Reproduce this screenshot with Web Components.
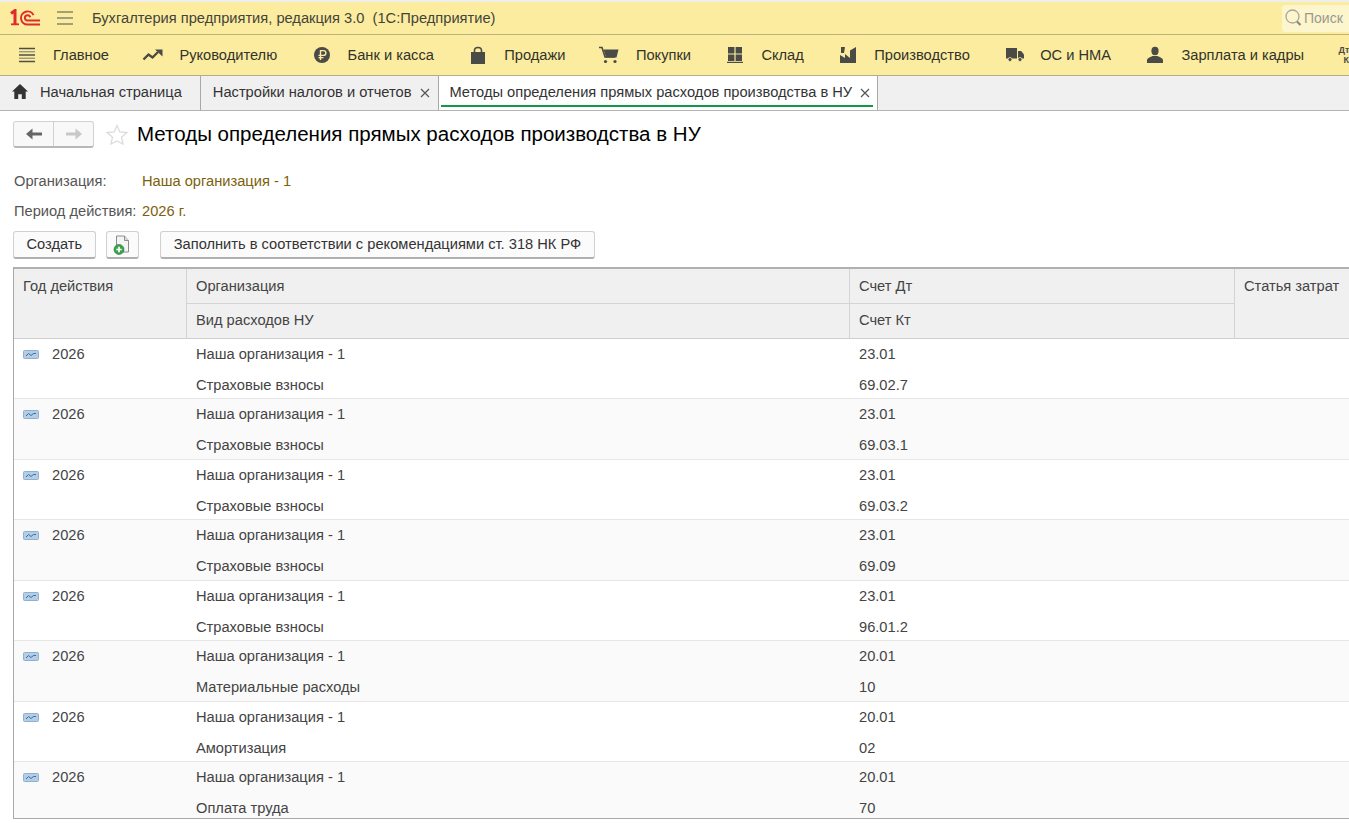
<!DOCTYPE html>
<html lang="ru">
<head>
<meta charset="utf-8">
<title>Методы определения прямых расходов производства в НУ</title>
<style>
  html, body { margin: 0; height: 100%; overflow: hidden; background: #fff; }
  body { display: flex; flex-direction: column; height: 100vh; font: 14.67px "Liberation Sans", Arial, sans-serif; color: #333; }
  svg { display: block; overflow: visible; }
</style>
</head>
<body>
  <app-titlebar>Бухгалтерия предприятия, редакция 3.0  (1С:Предприятие)</app-titlebar>

  <section-bar>
    <section-item label="Главное">
      <svg width="16" height="16" viewBox="0 0 16 16"><path d="M0 1.5h16M0 8h16M0 14.5h16" stroke="#4f4f48" stroke-width="1.4"/><path d="M0 4.8h16M0 11.2h16" stroke="#77776a" stroke-width="1"/></svg>
    </section-item>
    <section-item label="Руководителю">
      <svg width="16" height="16" viewBox="0 0 16 16"><path d="M-1.5 12.5 3.5 7.5 7.5 10.5 13 5" fill="none" stroke="#4a4a46" stroke-width="2.4"/><path d="M10 2.5h7.5V9.5z" fill="#4a4a46"/></svg>
    </section-item>
    <section-item label="Банк и касса">
      <svg width="16" height="16" viewBox="0 0 16 16"><circle cx="8" cy="8" r="8" fill="#4a4a46"/><path d="M6.5 13V3.6h3a2.4 2.4 0 0 1 0 4.8h-5M4.5 10.6h5" fill="none" stroke="#fbec9f" stroke-width="1.4"/></svg>
    </section-item>
    <section-item label="Продажи">
      <svg width="16" height="17" viewBox="0 0 16 17"><path d="M1 5h14v12H1z" fill="#4a4a46"/><path d="M4.5 8V3.5a3.5 3 0 0 1 7 0V8" fill="none" stroke="#4a4a46" stroke-width="1.6"/></svg>
    </section-item>
    <section-item label="Покупки">
      <svg width="16" height="16" viewBox="0 0 16 16"><path d="M-3 .5h3l3 9.5h10" fill="none" stroke="#4a4a46" stroke-width="1.6"/><path d="M1.5 2.5h15l-2 8h-10.5z" fill="#4a4a46"/><circle cx="3.5" cy="14.5" r="1.6" fill="#4a4a46"/><circle cx="13" cy="14.5" r="1.6" fill="#4a4a46"/></svg>
    </section-item>
    <section-item label="Склад">
      <svg width="16" height="16" viewBox="0 0 16 16"><path d="M1 0h6.4v6.4H1zM8.6 0H15v6.4H8.6zM1 7.6h6.4V14H1zM8.6 7.6H15V14H8.6z" fill="#4a4a46"/><path d="M0 15.4h16" stroke="#4a4a46" stroke-width="1.2"/></svg>
    </section-item>
    <section-item label="Производство">
      <svg width="16" height="16" viewBox="0 0 16 16"><path d="M0 16V8l5 3V7l5 4V3.5L16 0v16z" fill="#4a4a46"/><path d="M1 0h4l-1 6H1z" fill="#4a4a46"/></svg>
    </section-item>
    <section-item label="ОС и НМА">
      <svg width="18" height="14" viewBox="0 0 18 14"><path d="M0 0h11v10.5H0z" fill="#4a4a46"/><path d="M12 3h3.2L18 6.5v4h-6z" fill="#4a4a46"/><circle cx="4" cy="11.5" r="2" fill="#4a4a46" stroke="#fbec9f" stroke-width=".8"/><circle cx="14" cy="11.5" r="2" fill="#4a4a46" stroke="#fbec9f" stroke-width=".8"/></svg>
    </section-item>
    <section-item label="Зарплата и кадры">
      <svg width="16" height="16" viewBox="0 0 16 16"><ellipse cx="8" cy="4" rx="3.6" ry="4.2" fill="#4a4a46"/><path d="M0 16v-2.6C0 11 3.5 10 5.5 9h5c2 1 5.5 2 5.5 4.4V16z" fill="#4a4a46"/></svg>
    </section-item>
    <section-item label="">
      <span style="display:block;width:16px;margin-left:-2px;font:bold 9px/10px 'Liberation Sans',sans-serif;color:#4a4a46">Дт<br>&nbsp;&nbsp;Кт</span>
    </section-item>
  </section-bar>

  <tab-bar>
    <tab-item>
      <svg slot="icon" width="16" height="15" viewBox="0 0 16 15"><path d="M8 0 16 7.6h-2.3V15H9.8v-4.800H6.200V15H2.300V7.600H0z" fill="#333"/></svg>
      Начальная страница
    </tab-item>
    <tab-item closable style="padding-right:8px">Настройки налогов и отчетов</tab-item>
    <tab-item closable active>Методы определения прямых расходов производства в НУ</tab-item>
  </tab-bar>

  <form-head>Методы определения прямых расходов производства в НУ</form-head>
  <form-field label="Организация:" top="24">Наша организация - 1</form-field>
  <form-field label="Период действия:" top="12">2026 г.</form-field>

  <form-actions>
    <action-button>Создать</action-button>
    <action-button icon>
      <svg width="18" height="20" viewBox="0 0 18 20"><path d="M3.500 1h8l4 4.500V17h-12z" fill="#f4f4f4" stroke="#8c8c8c"/><path d="M11.500 1v4.500h4" fill="#dcdcdc" stroke="#8c8c8c"/><circle cx="6" cy="14.500" r="5" fill="#3ea24a" stroke="#1f7a30" stroke-width=".6"/><path d="M6 11.800v5.400M3.300 14.500h5.400" stroke="#fff" stroke-width="1.700"/></svg>
    </action-button>
    <action-button style="margin-left:11px;padding:0 13px 1px">Заполнить в соответствии с рекомендациями ст. 318 НК РФ</action-button>
  </form-actions>

  <list-table>
    <list-row year="2026" org="Наша организация - 1" kind="Страховые взносы" dt="23.01" kt="69.02.7"></list-row>
    <list-row alt year="2026" org="Наша организация - 1" kind="Страховые взносы" dt="23.01" kt="69.03.1"></list-row>
    <list-row year="2026" org="Наша организация - 1" kind="Страховые взносы" dt="23.01" kt="69.03.2"></list-row>
    <list-row alt year="2026" org="Наша организация - 1" kind="Страховые взносы" dt="23.01" kt="69.09"></list-row>
    <list-row year="2026" org="Наша организация - 1" kind="Страховые взносы" dt="23.01" kt="96.01.2"></list-row>
    <list-row alt year="2026" org="Наша организация - 1" kind="Материальные расходы" dt="20.01" kt="10"></list-row>
    <list-row year="2026" org="Наша организация - 1" kind="Амортизация" dt="20.01" kt="02"></list-row>
    <list-row alt year="2026" org="Наша организация - 1" kind="Оплата труда" dt="20.01" kt="70"></list-row>
  </list-table>

<script>
class AppTitlebar extends HTMLElement {
  connectedCallback() {
    this.attachShadow({ mode: 'open' });
    this.shadowRoot.innerHTML = `
      <style>
        :host {
          display: flex;
          align-items: center;
          flex: none;
          height: 32px;
          margin-top: 2px;
          box-shadow: 0 -2px 0 #eeeeea;
          background: #fbec9f;
          border-bottom: 1px solid #bcb27f;
          overflow: hidden;
        }
        .logo { margin: -2px 0 0 10px; }
        .menu { margin-left: 17px; }
        .title { margin-left: 19px; white-space: pre; color: #44443a; flex: 1; }
        .search {
          display: flex;
          align-items: center;
          gap: 2px;
          width: 67px;
          height: 27px;
          flex: none;
          padding-left: 3px;
          box-sizing: border-box;
          background: #fdf5cb;
          border-radius: 3px 0 0 3px;
          color: #9a9a90;
          font-size: 14px;
          white-space: nowrap;
        }
      </style>
      <svg class="logo" width="30" height="17" viewBox="0 0 30 17">
        <path d="M1 4.500 5 1.500V15" fill="none" stroke="#e02b2b" stroke-width="3"/>
        <path d="M1 15.300h8" stroke="#e02b2b" stroke-width="1.800"/>
        <path d="M30 15.600H17.500a6.600 6.600 0 1 1 6-9.500M30 11.600H17.500a2.700 2.700 0 1 1 2.700-3.300" fill="none" stroke="#e02b2b" stroke-width="2"/>
      </svg>
      <svg class="menu" width="16" height="14" viewBox="0 0 16 14"><path d="M0 1h16M0 7h16M0 13h16" stroke="#86866e" stroke-width="1.700"/></svg>
      <div class="title"><slot></slot></div>
      <div class="search">
        <svg width="17" height="18" viewBox="0 0 17 18"><circle cx="7.500" cy="7.500" r="6.500" fill="none" stroke="#a8a89c" stroke-width="1.300"/><path d="M12 12.500l3.500 3.500" stroke="#8a8a7c" stroke-width="2.200"/></svg>
        Поиск
      </div>
    `;
  }
}

class SectionBar extends HTMLElement {
  connectedCallback() {
    this.attachShadow({ mode: 'open' });
    this.shadowRoot.innerHTML = `
      <style>
        :host {
          display: flex;
          align-items: center;
          gap: 36.4px;
          flex: none;
          height: 40px;
          padding-left: 19px;
          background: #fbec9f;
          border-bottom: 1px solid #b5ad85;
          overflow: hidden;
        }
      </style>
      <slot></slot>
    `;
  }
}

class SectionItem extends HTMLElement {
  connectedCallback() {
    this.attachShadow({ mode: 'open' });
    this.shadowRoot.innerHTML = `
      <style>
        :host {
          display: flex;
          align-items: center;
          gap: 18px;
          flex: none;
          color: #33332c;
          white-space: nowrap;
        }
        .icon { width: 16px; flex: none; }
      </style>
      <div class="icon"><slot></slot></div>
      <span>${this.getAttribute('label')}</span>
    `;
  }
}

class TabBar extends HTMLElement {
  connectedCallback() {
    this.attachShadow({ mode: 'open' });
    this.shadowRoot.innerHTML = `
      <style>
        :host {
          display: flex;
          flex: none;
          height: 34px;
          background: #f0f0f0;
          border-bottom: 1px solid #b4b4b4;
        }
      </style>
      <slot></slot>
    `;
  }
}

class TabItem extends HTMLElement {
  connectedCallback() {
    const closable = this.hasAttribute('closable');
    this.attachShadow({ mode: 'open' });
    this.shadowRoot.innerHTML = `
      <style>
        :host {
          display: flex;
          align-items: center;
          position: relative;
          flex: none;
          box-sizing: border-box;
          padding: 0 7px 3px 12px;
          color: #333;
          white-space: nowrap;
          border-right: 1px solid #a8a8a8;
        }
        :host([active]) { background: #fff; padding-left: 10px; }
        :host([active])::after {
          content: "";
          position: absolute;
          left: 2px;
          right: 4px;
          bottom: 3px;
          height: 2px;
          background: #11984a;
        }
        :host([active]) .close { margin-left: 8px; }
        ::slotted(svg) { margin-right: 12px; }
        .close { margin-left: 9px; width: 10px; height: 10px; margin-top: 3px; }
      </style>
      <slot name="icon"></slot>
      <slot></slot>
      ${closable ? '<svg class="close" viewBox="0 0 10 10" style="display:block"><path d="M1 1l8 8M9 1l-8 8" stroke="#555" stroke-width="1.200"/></svg>' : '<span style="width:11px"></span>'}
    `;
  }
}

class FormHead extends HTMLElement {
  connectedCallback() {
    this.attachShadow({ mode: 'open' });
    this.shadowRoot.innerHTML = `
      <style>
        :host {
          display: flex;
          align-items: center;
          flex: none;
          height: 27px;
          margin: 10px 0 0 13px;
          font-size: 20.53px;
          color: #000;
          white-space: nowrap;
        }
        .nav {
          display: flex;
          width: 81px;
          height: 27px;
          box-sizing: border-box;
          border: 1px solid #d2d2d2;
          border-bottom: 2px solid #b8b8b8;
          border-radius: 3px;
          background: #f8f8f8;
        }
        .nav div { flex: 1; display: flex; align-items: center; justify-content: center; }
        .nav div:first-child { border-right: 1px solid #d2d2d2; }
        .star { margin: 1px 9px 0 12px; }
        .title { margin-top: -2px; }
      </style>
      <div class="nav">
        <div><svg width="16" height="12" viewBox="0 0 16 12"><path d="M0 6 6.500 .5V4.500H16v3H6.500V11.500z" fill="#666"/></svg></div>
        <div><svg width="16" height="12" viewBox="0 0 16 12"><path d="M16 6 9.500 .5V4.500H0v3H9.500V11.500z" fill="#c8c8c8"/></svg></div>
      </div>
      <svg class="star" width="22" height="22" viewBox="0 0 22 22"><path d="M11 1.500l2.800 6.500 7 .6-5.300 4.600 1.600 6.900L11 16.900l-6.100 3.200 1.600-6.900L1.200 8.600l7-.6z" fill="#fff" stroke="#dcdcdc" stroke-width="1.300"/></svg>
      <div class="title"><slot></slot></div>
    `;
  }
}

class FormField extends HTMLElement {
  connectedCallback() {
    this.attachShadow({ mode: 'open' });
    this.shadowRoot.innerHTML = `
      <style>
        :host {
          display: flex;
          flex: none;
          height: 18px;
          line-height: 18px;
          margin: ${this.getAttribute('top')}px 0 0 14px;
          white-space: nowrap;
        }
        .label { width: 128px; flex: none; color: #555; }
        .value { color: #7d5f0c; }
      </style>
      <div class="label">${this.getAttribute('label')}</div>
      <div class="value"><slot></slot></div>
    `;
  }
}

class FormActions extends HTMLElement {
  connectedCallback() {
    this.attachShadow({ mode: 'open' });
    this.shadowRoot.innerHTML = `
      <style>
        :host {
          display: flex;
          gap: 10px;
          flex: none;
          height: 28px;
          margin: 11px 0 0 13px;
        }
      </style>
      <slot></slot>
    `;
  }
}

class ActionButton extends HTMLElement {
  connectedCallback() {
    this.attachShadow({ mode: 'open' });
    this.shadowRoot.innerHTML = `
      <style>
        :host {
          display: flex;
          align-items: center;
          justify-content: center;
          box-sizing: border-box;
          height: 28px;
          padding: 0 12.5px 1px;
          color: #333;
          white-space: nowrap;
          background: #fbfbfb;
          border: 1px solid #d0d0d0;
          border-bottom: 2px solid #b0b0b0;
          border-radius: 3px;
        }
        :host([icon]) { width: 33px; padding: 0; }
      </style>
      <slot></slot>
    `;
  }
}

const COLS = '173px 663px 385px 1fr';

class ListTable extends HTMLElement {
  connectedCallback() {
    this.attachShadow({ mode: 'open' });
    this.shadowRoot.innerHTML = `
      <style>
        :host {
          display: block;
          flex: 1;
          min-height: 0;
          width: 1400px;
          margin: 8px 0 4px 13px;
          box-sizing: border-box;
          border: 1px solid #a8a8a8;
          border-top: 2px solid #b0b0b0;
          overflow: hidden;
        }
        .head {
          display: grid;
          grid-template-columns: ${COLS};
          grid-template-rows: 35px 34.5px;
          height: 69.5px;
          box-sizing: border-box;
          background: #f0f0f0;
          border-bottom: 1px solid #cfcfcf;
          color: #444;
        }
        .head div {
          box-sizing: border-box;
          padding: 8px 0 0 9px;
          line-height: 18px;
          border-right: 1px solid #d4d4d4;
          white-space: nowrap;
        }
        .head .low { padding-top: 7px; }
        .tall { grid-row: span 2; }
        .top { border-bottom: 1px solid #d4d4d4; }
      </style>
      <div class="head">
        <div class="tall">Год действия</div>
        <div class="top">Организация</div>
        <div class="top">Счет Дт</div>
        <div class="tall">Статья затрат</div>
        <div class="low">Вид расходов НУ</div>
        <div class="low">Счет Кт</div>
      </div>
      <slot></slot>
    `;
  }
}

class ListRow extends HTMLElement {
  connectedCallback() {
    const a = n => this.getAttribute(n);
    this.attachShadow({ mode: 'open' });
    this.shadowRoot.innerHTML = `
      <style>
        :host {
          display: grid;
          grid-template-columns: ${COLS};
          grid-template-rows: 30px 1fr;
          height: 60.5px;
          box-sizing: border-box;
          background: #fff;
          border-bottom: 1px solid #e6e6e6;
          color: #444;
          line-height: 29.75px;
          white-space: nowrap;
        }
        :host([alt]) { background: #fafafa; }
        div { box-sizing: border-box; padding: 1px 0 0 9px; }
        .low { line-height: 31px; }
        .year { display: flex; align-items: flex-start; gap: 13px; }
        .year svg { margin-top: 10px; }
      </style>
      <div class="year">
        <svg width="16" height="9" viewBox="0 0 16 9" style="display:block"><rect x=".5" y=".5" width="15" height="8" rx="1" fill="#b3cde6" stroke="#8fb0d0"/><path d="M3 6 5.500 3.500 8 5.500 10.500 3.500H13" fill="none" stroke="#3d6d9e" stroke-width="1"/></svg>
        <span>${a('year')}</span>
      </div>
      <div>${a('org')}</div>
      <div>${a('dt')}</div>
      <div></div>
      <div></div>
      <div class="low">${a('kind')}</div>
      <div class="low">${a('kt')}</div>
      <div></div>
    `;
  }
}

customElements.define('app-titlebar', AppTitlebar);
customElements.define('section-bar', SectionBar);
customElements.define('section-item', SectionItem);
customElements.define('tab-bar', TabBar);
customElements.define('tab-item', TabItem);
customElements.define('form-head', FormHead);
customElements.define('form-field', FormField);
customElements.define('form-actions', FormActions);
customElements.define('action-button', ActionButton);
customElements.define('list-table', ListTable);
customElements.define('list-row', ListRow);
</script>
</body>
</html>
